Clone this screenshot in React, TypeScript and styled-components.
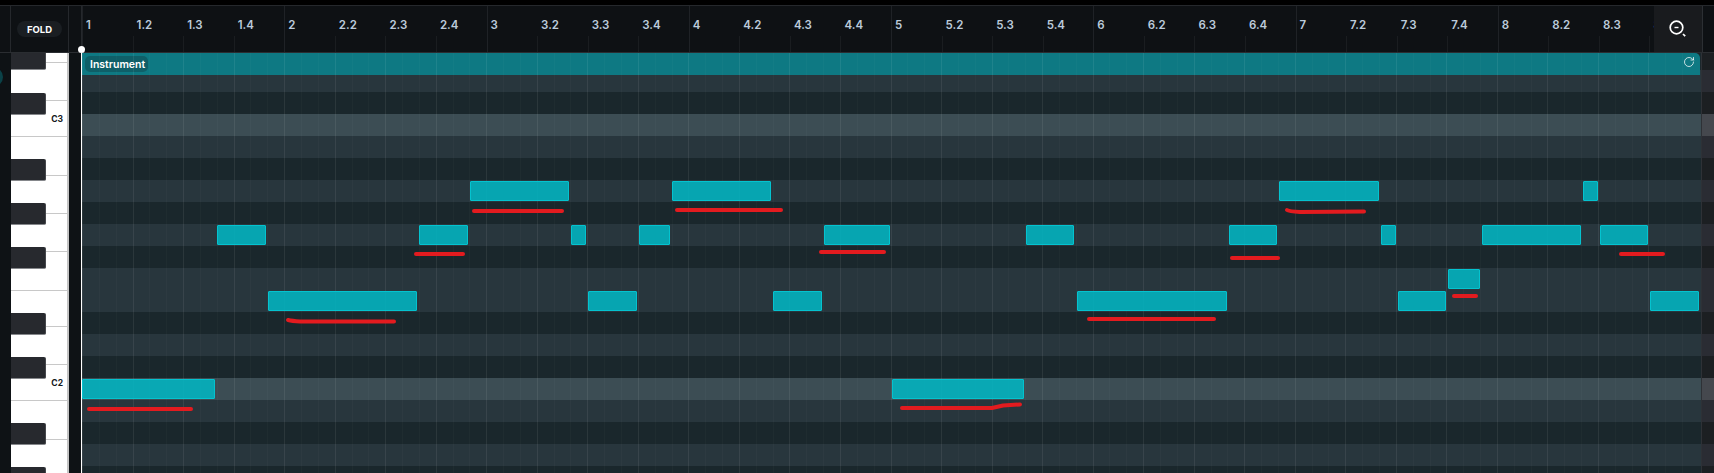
import React from "react";
import styled, { createGlobalStyle } from "styled-components";
import { RotateCw } from "lucide-react";

const ORIGIN_X = 82;
const ORIGIN_Y = 53;
const BEAT = 50.575;

type RowKind = "dark" | "light" | "root";
type Note = { x: number; end: number; row: number };

// top to bottom, the first one is cut by the header
const rows: { kind: RowKind; height: number }[] = [
  { kind: "dark", height: 17 },
  { kind: "light", height: 22 },
  { kind: "dark", height: 22 },
  { kind: "root", height: 22 },
  { kind: "light", height: 22 },
  { kind: "dark", height: 22 },
  { kind: "light", height: 22 },
  { kind: "dark", height: 22 },
  { kind: "light", height: 22 },
  { kind: "dark", height: 22 },
  { kind: "light", height: 22 },
  { kind: "light", height: 22 },
  { kind: "dark", height: 22 },
  { kind: "light", height: 22 },
  { kind: "dark", height: 22 },
  { kind: "root", height: 22 },
  { kind: "light", height: 22 },
  { kind: "dark", height: 22 },
  { kind: "light", height: 22 },
  { kind: "dark", height: 22 },
];

const notes: Note[] = [
  { x: 470, end: 569, row: 180 },
  { x: 672, end: 771, row: 180 },
  { x: 1279, end: 1379, row: 180 },
  { x: 1583, end: 1598, row: 180 },
  { x: 217, end: 266, row: 224 },
  { x: 419, end: 468, row: 224 },
  { x: 571, end: 586, row: 224 },
  { x: 639, end: 670, row: 224 },
  { x: 824, end: 890, row: 224 },
  { x: 1026, end: 1074, row: 224 },
  { x: 1229, end: 1277, row: 224 },
  { x: 1381, end: 1396, row: 224 },
  { x: 1482, end: 1581, row: 224 },
  { x: 1600, end: 1648, row: 224 },
  { x: 1448, end: 1480, row: 268 },
  { x: 268, end: 417, row: 290 },
  { x: 588, end: 637, row: 290 },
  { x: 773, end: 822, row: 290 },
  { x: 1077, end: 1227, row: 290 },
  { x: 1398, end: 1446, row: 290 },
  { x: 1650, end: 1699, row: 290 },
  { x: 82, end: 215, row: 378 },
  { x: 892, end: 1024, row: 378 },
];

const scribbles = [
  "M89 409H191",
  "M288 320Q292 321 300 321.5H394",
  "M474 211H562",
  "M416 254H463",
  "M677 210H781",
  "M821 252H884",
  "M1287 210Q1289 211.5 1300 212L1364 211.5",
  "M1232 258H1278",
  "M1089 319H1214",
  "M1454 296H1476",
  "M1621 254H1663",
  "M902 408H992L1003 405.5L1020 404.5",
];

const whiteKeys: { height: number; label?: string }[] = [
  { height: 10 },
  { height: 38 },
  { height: 36, label: "C3" },
  { height: 39 },
  { height: 38 },
  { height: 38 },
  { height: 39 },
  { height: 36 },
  { height: 38 },
  { height: 36, label: "C2" },
  { height: 39 },
  { height: 36 },
];

const blackKeys = [-5, 40, 106, 150, 194, 260, 304, 370, 414];

const rulerLabels = Array.from({ length: 32 }, (_, i) => {
  const bar = Math.floor(i / 4) + 1;
  const beat = i % 4;
  return beat === 0 ? String(bar) : `${bar}.${beat + 1}`;
});

const GlobalStyle = createGlobalStyle`
  html, body {
    margin: 0;
    padding: 0;
    background: #0e1215;
  }
`;

const Page = styled.div`
  width: 1714px;
  height: 473px;
  overflow: hidden;
  display: flex;
  flex-direction: column;
  background: #000;
  font-family: Inter, "Liberation Sans", sans-serif;
`;

const Header = styled.div`
  box-sizing: border-box;
  margin-top: 5px;
  height: 48px;
  display: flex;
  flex: none;
  background: #0e1114;
  border-top: 1px solid #25282c;
  border-bottom: 1px solid #2a2d31;
`;

const HeaderGap = styled.div<{ $width: number }>`
  box-sizing: border-box;
  flex: none;
  width: ${(p) => p.$width}px;
  border-right: 1px solid #25282c;
`;

const FoldCell = styled.div`
  box-sizing: border-box;
  flex: none;
  width: 58px;
  padding: 15px 0 0 6px;
  border-right: 1px solid #25282c;
`;

const FoldButton = styled.button`
  display: block;
  width: 45px;
  height: 16px;
  padding: 0;
  border: 0;
  border-radius: 8px;
  background: #1a1e22;
  color: #fff;
  font: 700 9.5px Inter, "Liberation Sans", sans-serif;
`;

const Ruler = styled.div`
  flex: none;
  width: 1572px;
  display: flex;
  overflow: hidden;
`;

const RulerCell = styled.div<{ $bar: boolean }>`
  box-sizing: border-box;
  position: relative;
  flex: none;
  width: ${BEAT}px;
  padding: 12px 0 0 4px;
  color: #bccbdb;
  font-size: 11.5px;
  font-weight: 600;
  line-height: 14px;

  &::before {
    content: "";
    position: absolute;
    left: 0;
    bottom: 0;
    width: 1px;
    height: ${(p) => (p.$bar ? 46 : 16)}px;
    background: ${(p) => (p.$bar ? "#1f2226" : "#1a1d20")};
  }
`;

const ZoomCell = styled.div`
  box-sizing: border-box;
  flex: none;
  width: 49px;
  display: flex;
  align-items: center;
  justify-content: center;
  background: #191b1e;
  border-right: 1px solid #2c2f33;
`;

const Body = styled.div`
  position: relative;
  flex: 1;
  min-height: 0;
  display: flex;
  background: #0e1215;
`;

const KnobEdge = styled.div`
  position: absolute;
  left: -17px;
  top: 14px;
  width: 20px;
  height: 20px;
  border-radius: 50%;
  background: #0b4248;
`;

const Piano = styled.div`
  position: relative;
  flex: none;
  margin-left: 11px;
  width: 58px;
  display: flex;
  flex-direction: column;
  background: #fff;
  border-right: 2px solid #c4c4c4;
  box-sizing: border-box;
  overflow: hidden;
`;

const WhiteKey = styled.div<{ $height: number }>`
  box-sizing: border-box;
  flex: none;
  height: ${(p) => p.$height}px;
  display: flex;
  align-items: center;
  justify-content: flex-end;
  padding-right: 4px;
  background: #fff;
  border-bottom: 1px solid #c8c8c8;
  color: #14181c;
  font-size: 8.5px;
  font-weight: 700;
`;

const BlackKey = styled.div`
  box-sizing: border-box;
  position: absolute;
  left: 0;
  width: 35px;
  height: 22px;
  background: #27292e;
  border-bottom: 1px solid #85878b;
  border-right: 1px solid #46484c;
  border-radius: 0 2px 2px 0;
`;

const Rail = styled.div`
  box-sizing: border-box;
  flex: none;
  width: 13px;
  background: #0e1215;
  border-right: 1px solid #fff;
`;

const PlayHead = styled.div`
  position: absolute;
  left: 78px;
  top: -7px;
  width: 7px;
  height: 7px;
  border-radius: 50%;
  background: #fff;
  z-index: 5;
`;

const Roll = styled.div`
  position: relative;
  flex: 1;
  min-width: 0;
  overflow: hidden;
`;

const LaneStack = styled.div`
  display: flex;
  flex-direction: column;
`;

const Lane = styled.div<{ $kind: RowKind; $height: number }>`
  flex: none;
  height: ${(p) => p.$height}px;
  display: flex;
  justify-content: flex-end;
  background: ${(p) =>
    p.$kind === "root" ? "#3c4d54" : p.$kind === "light" ? "#28363d" : "#1a272c"};
`;

const LaneTail = styled.div<{ $kind: RowKind }>`
  box-sizing: border-box;
  width: 13px;
  border-left: 1px solid #2e3136;
  background: ${(p) =>
    p.$kind === "root" ? "#45484e" : p.$kind === "light" ? "#2a2c33" : "#1c1f22"};
`;

const Clip = styled.div`
  box-sizing: border-box;
  position: absolute;
  left: 0;
  top: 0;
  width: 1618px;
  height: 22px;
  padding: 3px 5px 0 3px;
  display: flex;
  align-items: flex-start;
  justify-content: space-between;
  background: #0e7983;
  border-radius: 0 5px 0 0;
  color: #fff;
`;

const ClipName = styled.span`
  box-sizing: border-box;
  height: 16px;
  width: 63px;
  padding-left: 5px;
  border-radius: 5px;
  background: #0f5f68;
  font-size: 10.5px;
  font-weight: 600;
  line-height: 18px;
`;

const GridLines = styled.div`
  position: absolute;
  left: 0;
  top: 0;
  bottom: 0;
  width: 1619px;
  display: flex;
  pointer-events: none;
`;

const GridCell = styled.div<{ $strong: boolean }>`
  box-sizing: border-box;
  flex: none;
  width: ${BEAT / 3}px;
  border-left: 1px solid
    ${(p) => (p.$strong ? "rgba(255,255,255,0.075)" : "rgba(255,255,255,0.025)")};
`;

const NoteBlock = styled.div`
  box-sizing: border-box;
  position: absolute;
  height: 20px;
  background: rgba(0, 185, 198, 0.85);
  border: 1px solid #04c3cf;
  border-radius: 1px;
`;

const Scribbles = styled.svg`
  position: absolute;
  left: 0;
  top: 0;
  width: 1632px;
  height: 420px;
  pointer-events: none;
`;

const ZoomOutIcon = () => (
  <svg width="20" height="20" viewBox="0 0 20 20" fill="none" stroke="#fff">
    <circle cx="8.5" cy="8.5" r="6.3" strokeWidth="1.7" />
    <path d="M6.5 8.5h4" strokeWidth="1.4" />
    <path d="M15 15l2.2 2.2" strokeWidth="1.7" />
  </svg>
);

export default function App() {
  return (
    <Page>
      <GlobalStyle />
      <Header>
        <HeaderGap $width={11} />
        <FoldCell>
          <FoldButton>FOLD</FoldButton>
        </FoldCell>
        <HeaderGap $width={13} />
        <Ruler>
          {rulerLabels.map((label, i) => (
            <RulerCell key={i} $bar={i % 4 === 0}>
              {label}
            </RulerCell>
          ))}
        </Ruler>
        <ZoomCell>
          <ZoomOutIcon />
        </ZoomCell>
      </Header>
      <Body>
        <KnobEdge />
        <Piano>
          {whiteKeys.map((key, i) => (
            <WhiteKey key={i} $height={key.height}>
              {key.label}
            </WhiteKey>
          ))}
          {blackKeys.map((top) => (
            <BlackKey key={top} style={{ top }} />
          ))}
        </Piano>
        <Rail />
        <PlayHead />
        <Roll>
          <LaneStack>
            {rows.map((row, i) => (
              <Lane key={i} $kind={row.kind} $height={row.height}>
                <LaneTail $kind={row.kind} />
              </Lane>
            ))}
          </LaneStack>
          <Clip>
            <ClipName>Instrument</ClipName>
            <RotateCw size={12} strokeWidth={1.5} />
          </Clip>
          <GridLines>
            {Array.from({ length: 96 }, (_, i) => (
              <GridCell key={i} $strong={i % 3 === 0} />
            ))}
          </GridLines>
          {notes.map((n) => (
            <NoteBlock
              key={`${n.x}-${n.row}`}
              style={{
                left: n.x - ORIGIN_X,
                top: n.row + 1 - ORIGIN_Y,
                width: n.end - n.x,
              }}
            />
          ))}
          <Scribbles viewBox={`${ORIGIN_X} ${ORIGIN_Y} 1632 420`} fill="none">
            {scribbles.map((d) => (
              <path key={d} d={d} stroke="#e31b1f" strokeWidth="4" strokeLinecap="round" strokeLinejoin="round" />
            ))}
          </Scribbles>
        </Roll>
      </Body>
    </Page>
  );
}
